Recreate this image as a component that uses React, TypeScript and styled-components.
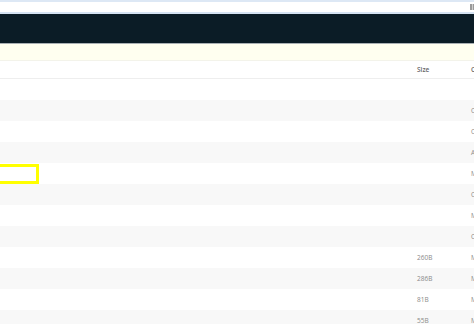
import { createGlobalStyle, styled } from "styled-components";

const Global = createGlobalStyle`
  html, body {
    margin: 0;
    padding: 0;
    background: #fff;
    overflow: hidden;
  }
  body {
    font-family: "Open Sans", "Liberation Sans", sans-serif;
  }
`;

const Page = styled.div`
  width: 474px;
  height: 324px;
  overflow: hidden;
`;

const AddressBar = styled.div`
  height: 10px;
  border-top: 2px solid #dde8f5;
  border-bottom: 2px solid #d5e3f3;
  background: #fff;
  display: flex;
  justify-content: flex-end;
  align-items: center;
`;

const Navbar = styled.div`
  height: 29px;
  background: #0b1c26;
  border-bottom: 1px solid #a9b0b4;
`;

const Notice = styled.div`
  height: 16px;
  background: #fffff0;
  border-bottom: 1px solid #f3f3ea;
`;

const Row = styled.div<{ $head?: boolean; $odd?: boolean }>`
  display: grid;
  grid-template-columns: 417px 54px 40px;
  height: ${({ $head }) => ($head ? "17px" : "21px")};
  align-items: center;
  background: ${({ $odd }) => ($odd ? "#f8f8f8" : "#fff")};
  border-bottom: ${({ $head }) => ($head ? "1px solid #eeeeee" : "none")};
  font-size: 6.5px;
  color: ${({ $head }) => ($head ? "#666" : "#8a8a8a")};
  font-weight: ${({ $head }) => ($head ? 600 : 400)};
  white-space: nowrap;
`;

const Cell = styled.div`
  overflow: visible;
`;

const Highlight = styled.span`
  display: block;
  width: 73px;
  height: 14px;
  margin-left: -40px;
  border: 3px solid #ffff00;
`;

const files = [
  { size: "", msg: "" },
  { size: "", msg: "Create docs folder" },
  { size: "", msg: "Clean up sources" },
  { size: "", msg: "Add examples" },
  { size: "", msg: "Move tests", mark: true },
  { size: "", msg: "Cleanup build" },
  { size: "", msg: "Merge branch" },
  { size: "", msg: "Create scripts" },
  { size: "260B", msg: "Merge pull request" },
  { size: "286B", msg: "Merge pull request" },
  { size: "81B", msg: "Merge branch" },
  { size: "55B", msg: "Merge branch" },
];

export default function App() {
  return (
    <Page>
      <Global />
      <AddressBar>
        <svg width="6" height="6" viewBox="0 0 6 6" style={{ marginRight: -2 }}>
          <rect x="0" y="0" width="6" height="6" fill="#9a9a9a" />
          <rect x="2" y="0" width="1" height="6" fill="#cfcfcf" />
        </svg>
      </AddressBar>
      <Navbar />
      <Notice />
      <Row $head>
        <Cell />
        <Cell>Size</Cell>
        <Cell>Commit</Cell>
      </Row>
      {files.map((f, i) => (
        <Row key={i} $odd={i % 2 === 1}>
          <Cell>{f.mark && <Highlight />}</Cell>
          <Cell>{f.size}</Cell>
          <Cell>{f.msg}</Cell>
        </Row>
      ))}
    </Page>
  );
}
